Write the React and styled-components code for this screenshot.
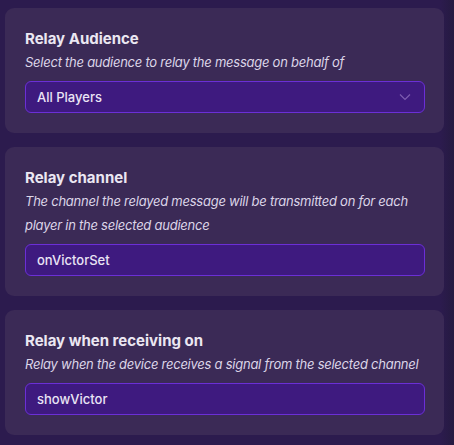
import React from "react";
import styled, { createGlobalStyle } from "styled-components";

const Global = createGlobalStyle`
  html, body {
    margin: 0;
    padding: 0;
    background: #2c1b4e;
  }
  body {
    font-family: Inter, "Noto Sans", sans-serif;
  }
`;

const Page = styled.div`
  width: 454px;
  height: 445px;
  box-sizing: border-box;
  padding: 8px 10px 0 5px;
  display: flex;
  flex-direction: column;
  gap: 14px;
  background: linear-gradient(90deg, #2c1b4e 0%, #2c1b4e 97%, #251a40 100%);
  overflow: hidden;
`;

const Card = styled.section`
  background: #3b2a56;
  border-radius: 9px;
  padding: 20px 19px 20px 20px;
  display: flex;
  flex-direction: column;
`;

const Title = styled.h3`
  margin: 0;
  font-size: 15px;
  line-height: 22px;
  font-weight: 700;
  color: #ebe7f2;
`;

const Hint = styled.p`
  margin: 0 0 7px;
  font-size: 13px;
  line-height: 24px;
  letter-spacing: -0.25px;
  font-style: italic;
  color: #dcd5e8;
`;

const Field = styled.div`
  height: 32px;
  box-sizing: border-box;
  border: 1px solid #6b2fd6;
  border-radius: 6px;
  background: #3e1a7f;
  display: flex;
  align-items: center;
  justify-content: space-between;
  padding: 0 13px 0 11px;
  font-size: 13px;
  font-weight: 500;
  color: #eae4f5;
`;

const Chevron = () => (
  <svg width="12" height="8" viewBox="0 0 12 8" fill="none">
    <path d="M1 1.5 L6 6.5 L11 1.5" stroke="#7d5cb0" strokeWidth="1.2" />
  </svg>
);

const sections = [
  {
    title: "Relay Audience",
    hint: "Select the audience to relay the message on behalf of",
    value: "All Players",
    select: true,
  },
  {
    title: "Relay channel",
    hint: "The channel the relayed message will be transmitted on for each player in the selected audience",
    value: "onVictorSet",
  },
  {
    title: "Relay when receiving on",
    hint: "Relay when the device receives a signal from the selected channel",
    value: "showVictor",
  },
];

export default function App() {
  return (
    <>
      <Global />
      <Page>
        {sections.map((s) => (
          <Card key={s.title}>
            <Title>{s.title}</Title>
            <Hint>{s.hint}</Hint>
            <Field>
              <span>{s.value}</span>
              {s.select && <Chevron />}
            </Field>
          </Card>
        ))}
      </Page>
    </>
  );
}
